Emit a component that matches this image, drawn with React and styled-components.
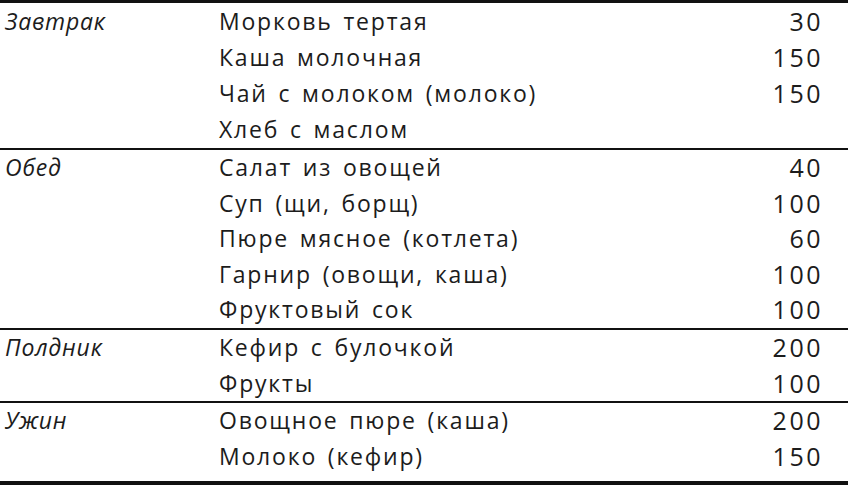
import React from 'react';
import styled, { createGlobalStyle } from 'styled-components';

const GlobalStyle = createGlobalStyle`
  body {
    margin: 0;
    background: #ffffff;
  }
`;

const Table = styled.div`
  width: 848px;
  height: 488px;
  box-sizing: border-box;
  font-family: 'Open Sans', 'Noto Sans', sans-serif;
  font-size: 23px;
  color: #1c1c1c;
  background: #ffffff;
  border-top: 3px solid #111;
`;

const Section = styled.div`
  display: flex;
  flex-direction: column;
  padding-bottom: ${(p) => (p.$last ? '6px' : '0')};
  border-bottom: ${(p) => (p.$last ? '4px' : '2px')} solid #111;
`;

const Row = styled.div`
  display: grid;
  grid-template-columns: 214px 1fr auto;
  align-items: center;
  height: ${(p) => p.$h}px;
  padding: 0 25px 0 5px;
  line-height: 1;
`;

const Meal = styled.div`
  font-style: italic;
  letter-spacing: 0.8px;
`;

const Dish = styled.div`
  white-space: nowrap;
  letter-spacing: 1.8px;
  word-spacing: 3px;
`;

const Amount = styled.div`
  text-align: right;
  font-size: 25px;
  letter-spacing: 2.5px;
`;

const menu = [
  {
    meal: 'Завтрак',
    rowHeight: 36.25,
    items: [
      ['Морковь тертая', '30'],
      ['Каша молочная', '150'],
      ['Чай с молоком (молоко)', '150'],
      ['Хлеб с маслом', ''],
    ],
  },
  {
    meal: 'Обед',
    rowHeight: 35.5,
    items: [
      ['Салат из овощей', '40'],
      ['Суп (щи, борщ)', '100'],
      ['Пюре мясное (котлета)', '60'],
      ['Гарнир (овощи, каша)', '100'],
      ['Фруктовый сок', '100'],
    ],
  },
  {
    meal: 'Полдник',
    rowHeight: 35.8,
    items: [
      ['Кефир с булочкой', '200'],
      ['Фрукты', '100'],
    ],
  },
  {
    meal: 'Ужин',
    rowHeight: 35.8,
    items: [
      ['Овощное пюре (каша)', '200'],
      ['Молоко (кефир)', '150'],
    ],
  },
];

export default function App() {
  return (
    <>
      <GlobalStyle />
      <Table>
        {menu.map((section, si) => (
          <Section key={section.meal} $last={si === menu.length - 1}>
            {section.items.map(([dish, amount], i) => (
              <Row key={dish} $h={section.rowHeight}>
                <Meal>{i === 0 ? section.meal : ''}</Meal>
                <Dish>{dish}</Dish>
                <Amount>{amount}</Amount>
              </Row>
            ))}
          </Section>
        ))}
      </Table>
    </>
  );
}
